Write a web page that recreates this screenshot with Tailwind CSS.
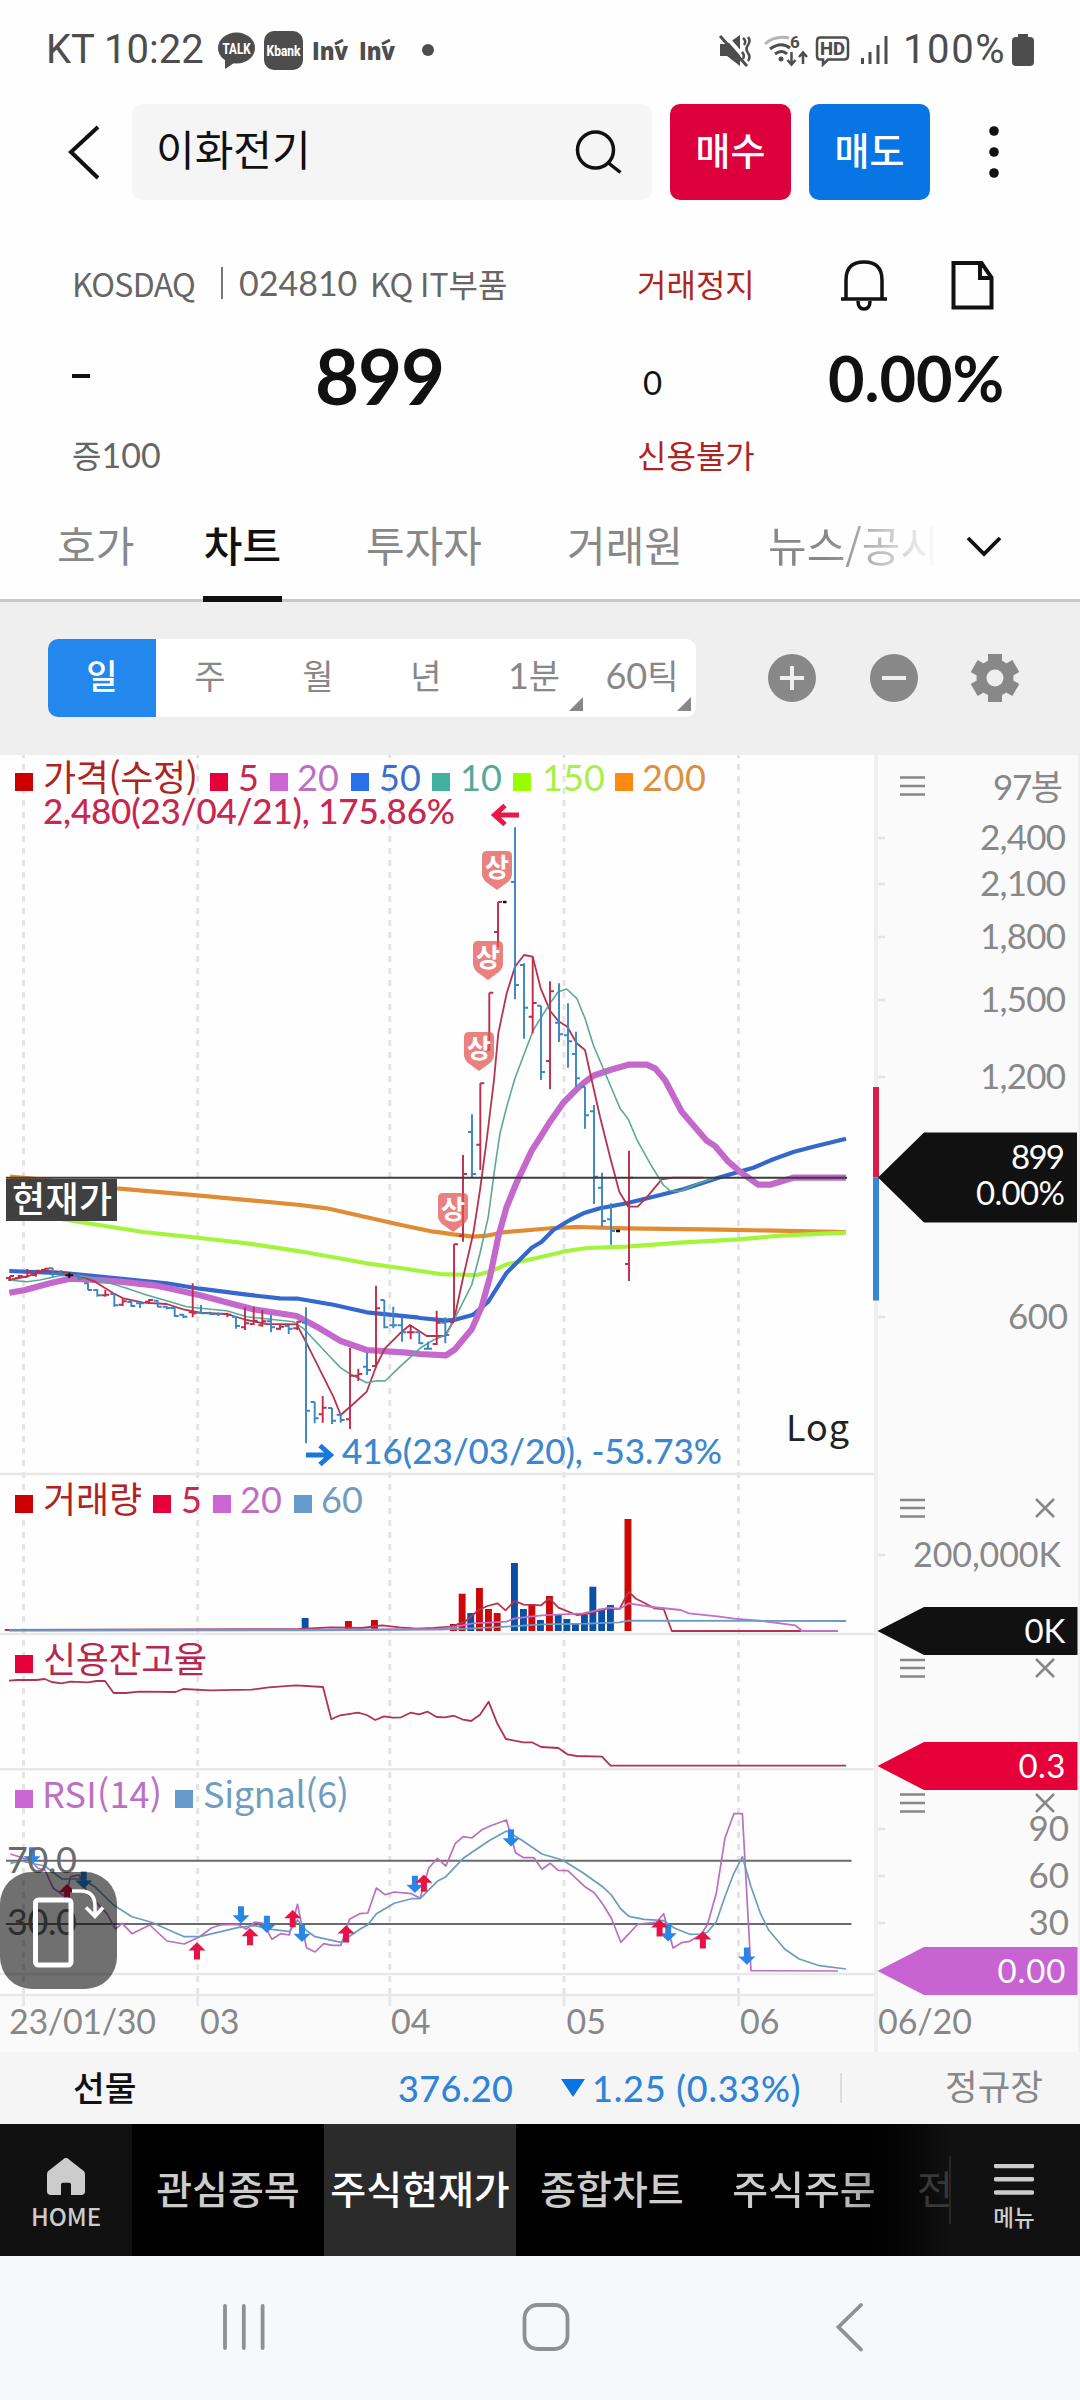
<!DOCTYPE html>
<html lang="ko">
<head>
<meta charset="utf-8">
<title>이화전기 차트</title>
<script src="https://cdn.jsdelivr.net/npm/@tailwindcss/browser@4"></script>
</head>
<body class="w-[1080px] h-[2400px] overflow-hidden bg-[#fefefe] font-['Noto_Sans_CJK_KR',sans-serif] text-[#111]">
<div class="flex flex-col w-[1080px] h-[2400px]">

  <!-- status bar -->
  <div class="flex h-[100px] items-center pl-[46px] text-[#4d4d4d] font-['Roboto',sans-serif]">
    <span class="w-[172px] text-[40px] leading-[40px] whitespace-nowrap">KT 10:22</span>
    <svg class="w-[220px] h-[60px]" viewBox="218 20 220 60">
      <ellipse cx="236.500" cy="48" rx="18.500" ry="15.500" fill="#4d4d4d"/><path d="M225 56v13l12-8z" fill="#4d4d4d"/>
      <text x="222.500" y="54" textLength="28" lengthAdjust="spacingAndGlyphs" font-size="15" font-weight="800" fill="#fff">TALK</text>
      <rect x="264" y="31" width="39" height="39" rx="10" fill="#4d4d4d"/>
      <text x="266.500" y="55.500" textLength="34" lengthAdjust="spacingAndGlyphs" font-size="15.500" font-weight="800" fill="#fff">Kbank</text>
      <g fill="#4d4d4d" font-family="Open Sans" font-weight="800" font-size="24">
        <text x="312" y="60" textLength="36" lengthAdjust="spacingAndGlyphs">Inv</text>
        <text x="359" y="60" textLength="36" lengthAdjust="spacingAndGlyphs">Inv</text>
      </g>
      <path d="M335 44l8-4M382 44l8-4" stroke="#4d4d4d" stroke-width="3"/>
      <circle cx="428" cy="50" r="6" fill="#4d4d4d"/>
    </svg>
    <svg class="ml-[278px] w-[172px] h-[40px]" viewBox="716 30 172 40" fill="none" stroke="#4d4d4d" stroke-width="3">
      <path d="M720 44h7l13-9v31l-13-10h-7z" fill="#4d4d4d" stroke="none"/><path d="M724 34l26 30" stroke="#fefefe" stroke-width="4"/><path d="M720 36l27 30" stroke-width="3"/><path d="M743 38q4 3 1 7M748 37q3 4 0 8t0 8 0 8M742 52q3 3 1 7" stroke-width="2.500"/>
      <path d="M765 44q10-9 24-6" stroke="#b5b5b5"/>
      <path d="M770 49q11-8 20-1M775 54q7-5 12 0"/><circle cx="781" cy="59" r="2.500" fill="#4d4d4d" stroke="none"/>
      <path d="M791.500 52v12M787.500 60l4 4.500 4-4.500M803 64V53M799 57l4-4.500 4 4.500" stroke-width="2.500"/>
      <text x="790" y="48" font-size="17" font-weight="700" fill="#4d4d4d" stroke="none">6</text>
      <path d="M820 37.500h24q4 0 4 4v14q0 4-4 4h-16l-5 5v-5h-3q-3 0-3-4v-14q0-4 3-4z" stroke-width="2.500"/>
      <text x="820" y="55" textLength="25" lengthAdjust="spacingAndGlyphs" font-size="18" font-weight="800" fill="#4d4d4d" stroke="none">HD</text>
      <path d="M862.500 58v6M870 52v12M878 45v19M886 36v28"/>
    </svg>
    <span class="ml-[15px] w-[109px] text-[40px] leading-[40px] whitespace-nowrap tracking-[1.6px]">100%</span>
    <svg class="w-[22px] h-[32px]" viewBox="0 0 22 32"><path d="M6 0h10v3h2q4 0 4 4v21q0 4-4 4H4q-4 0-4-4V7q0-4 4-4h2z" fill="#4d4d4d"/></svg>
  </div>

  <!-- search header -->
  <div class="flex h-[104px] items-center pt-1 pb-1 pl-[66px]">
    <svg class="w-[36px] h-[60px]" viewBox="66 122 36 60" fill="none" stroke="#111" stroke-width="4"><path d="M98 127L71 152l27 26"/></svg>
    <div class="ml-[30px] flex h-[96px] w-[520px] items-center justify-between rounded-[10px] bg-[#f5f5f5] pl-[24px] pr-[28px]">
      <span class="pb-[8px] text-[42px] leading-[60px] whitespace-nowrap">이화전기</span>
      <svg class="w-[50px] h-[50px]" viewBox="574 127 50 50" fill="none" stroke="#111" stroke-width="3.500"><circle cx="595.500" cy="150" r="18"/><path d="M608.500 163l12 9.500"/></svg>
    </div>
    <div class="ml-[18px] flex h-[96px] w-[121px] items-center justify-center rounded-[10px] bg-[#dc003c] pb-[8px] text-[38px] font-medium text-white">매수</div>
    <div class="ml-[18px] flex h-[96px] w-[121px] items-center justify-center rounded-[10px] bg-[#0875e5] pb-[8px] text-[38px] font-medium text-white">매도</div>
    <svg class="ml-[54px] w-[20px] h-[60px]" viewBox="984 122 20 60" fill="#111"><circle cx="994" cy="131" r="4.800"/><circle cx="994" cy="152" r="4.800"/><circle cx="994" cy="173" r="4.800"/></svg>
  </div>

  <!-- quote summary -->
  <div class="flex h-[128px] items-center pt-[33px] pl-[72px] text-[32px] leading-[40px] whitespace-nowrap">
    <div class="flex w-[565px] items-center pb-[3px] text-[#666]">
      <span class="w-[149px] tracking-[-0.7px]">KOSDAQ</span><span class="h-[32px] w-[2px] bg-[#777]"></span>
      <span class="ml-[16px] w-[131px] font-['Lato'] text-[34px]">024810</span><span class="w-[50px] tracking-[-0.5px]">KQ</span><span>IT부품</span>
    </div>
    <span class="w-[200px] pb-[3px] text-[#b0241f]">거래정지</span>
    <svg class="w-[54px] h-[56px]" viewBox="837 256 54 56" fill="none" stroke="#111" stroke-width="3.500"><path d="M841 298h46M846 297V279q0-18 18-18t18 18v18M858 300q0 8 6 8t6-8"/></svg>
    <svg class="ml-[57px] w-[50px] h-[56px]" viewBox="948 256 50 56" fill="none" stroke="#111" stroke-width="4"><path d="M953.500 262h28l10 14.500v30h-38zM980 262v15h11"/></svg>
  </div>
  <div class="flex h-[96px] items-center pb-[8px] pl-[72px] font-['Lato',sans-serif] whitespace-nowrap">
    <span class="h-[3.500px] w-[18px] bg-[#111]"></span>
    <span class="ml-[225px] w-[328px] text-[76px] leading-[80px] font-bold tracking-[-1.100px]">899</span>
    <span class="w-[185px] pt-[12px] text-[33px] leading-[40px]">0</span>
    <span class="pt-[3px] text-[63px] leading-[70px] font-bold">0.00%</span>
  </div>
  <div class="flex h-[72px] items-center pb-[24px] pl-[72px] text-[32px] leading-[40px]">
    <span class="w-[565px] pt-1 text-[#666]">증<span class="font-['Lato'] text-[34px]">100</span></span>
    <span class="pt-1 text-[#b0241f]">신용불가</span>
  </div>

  <!-- tabs -->
  <div class="relative flex h-[102px] items-start border-b-[3px] border-[#c8c8c8] pl-[57px] pt-[12px] text-[42px] leading-[64px] text-[#888] whitespace-nowrap">
    <span class="w-[146px]">호가</span>
    <span class="h-[90px] w-[79px] border-b-[6px] border-[#111] text-center font-medium text-[#111]">차트</span>
    <span class="ml-[84px] w-[201px]">투자자</span>
    <span class="w-[201px]">거래원</span>
    <span class="w-[170px] overflow-hidden bg-linear-to-r from-[#888] from-35% to-[#fefefe] to-100% bg-clip-text text-transparent">뉴스/공시</span>
    <svg class="ml-[24px] mt-[18px] w-[44px] h-[34px]" viewBox="962 532 44 34" fill="none" stroke="#111" stroke-width="3.800"><path d="M968 540l16 16 16-16"/></svg>
  </div>

  <!-- period selector -->
  <div class="flex h-[153px] items-center bg-[#efefef] pb-[2px] pl-[48px]">
    <div class="flex h-[78px] w-[648px] overflow-hidden rounded-[10px] bg-white text-center text-[34px] leading-[72px] text-[#888]">
      <span class="w-[108px] bg-[#2388ee] font-medium text-white">일</span>
      <span class="w-[108px]">주</span>
      <span class="w-[108px]">월</span>
      <span class="w-[108px]">년</span>
      <span class="relative w-[108px]"><span class="font-['Lato'] text-[36px]">1</span>분<svg class="absolute bottom-[6px] right-[5px] w-[14px] h-[14px]" viewBox="0 0 14 14"><path d="M14 0v14H0z" fill="#888"/></svg></span>
      <span class="relative w-[108px]"><span class="font-['Lato'] text-[36px]">60</span>틱<svg class="absolute bottom-[6px] right-[5px] w-[14px] h-[14px]" viewBox="0 0 14 14"><path d="M14 0v14H0z" fill="#888"/></svg></span>
    </div>
    <svg class="ml-[72px] w-[260px] h-[50px]" viewBox="768 652 260 50" fill="#888">
      <circle cx="792" cy="677" r="24"/><circle cx="894" cy="677" r="24"/>
      <path d="M780 677h24M792 665v24M882 677h24" stroke="#efefef" stroke-width="4"/>
      <g stroke="#888" stroke-width="14" fill="none">
        <path d="M995 653v12M995 689v12M974.200 665l10.400 6M1005.400 683l10.400 6M974.200 689l10.400-6M1005.400 671l10.400-6"/>
        <circle cx="995" cy="677" r="13.500" stroke-width="10"/>
      </g>
    </svg>
  </div>

  <!-- chart -->
  <div class="relative h-[1297px]">
    <svg id="chart" class="block w-[1080px] h-[1297px] font-['Lato','Noto_Sans_CJK_KR',sans-serif]" viewBox="0 755 1080 1297">
      <rect y="755" width="876" height="1240" fill="#fefefe"/>
      <rect x="876" y="755" width="202" height="1297" fill="#fafafa"/>
      <rect y="1995" width="876" height="57" fill="#fafafa"/>
      <path d="M23.500 752V1995M197.700 752V1995M389.800 752V1995M564 752V1995M738.500 752V1995" stroke="#e4e4e4" stroke-width="3" stroke-dasharray="6 6"/>
      <path d="M23.500 1995v11M197.700 1995v11M389.800 1995v11M564 1995v11M738.500 1995v11" stroke="#e8e8e8" stroke-width="3"/>
      <path d="M0 1474H876M0 1634H876M0 1769.300H876M0 1974H876M0 1995H876" stroke="#e8e8e8" stroke-width="2.500"/>
      <path d="M876 755V2052" stroke="#efefef" stroke-width="4"/><path d="M1079 755V2052" stroke="#efefef" stroke-width="2"/>
      <path d="M878 838h7M878 884h7M878 937h7M878 1000h7M878 1077h7M878 1317h7M878 1555h7M878 1829h7M878 1876h7M878 1923h7" stroke="#e4e4e4" stroke-width="2.500"/>

      <g id="plot" fill="none"></g>

      <!-- price legend -->
      <g>
        <rect x="15" y="773" width="18" height="18" fill="#cc0000"/><rect x="210" y="773" width="18" height="18" fill="#e60039"/><rect x="270" y="773" width="18" height="18" fill="#cc66d4"/><rect x="351" y="773" width="18" height="18" fill="#2970ea"/><rect x="432" y="773" width="18" height="18" fill="#40b0a0"/><rect x="513" y="773" width="18" height="18" fill="#99ff00"/><rect x="615" y="773" width="18" height="18" fill="#ff8a10"/>
      </g>
      <g font-size="36">
        <text x="43" y="791" textLength="155" font-family="Noto Sans CJK KR" fill="#b0241f">가격(수정)</text>
        <text x="238" y="791" fill="#c8284c">5</text><text x="297" y="791" fill="#bc70c4">20</text><text x="379" y="791" fill="#3c70c8">50</text><text x="460" y="791" fill="#58a898">10</text><text x="542" y="791" textLength="63" fill="#a8f048">150</text><text x="642" y="791" textLength="64" fill="#dc9040">200</text>
      </g>
      <text x="43" y="824" font-size="35" font-weight="500" textLength="412" fill="#c82850">2,480(23/04/21), 175.86%</text>
      <path d="M519 815H495M505 805.500l-10.500 9.500 10.500 9.500" fill="none" stroke="#e81848" stroke-width="5"/>
      <path d="M306 1455h24M320 1445.500l10.500 9.500-10.500 9.500" fill="none" stroke="#1878dc" stroke-width="5"/>
      <text x="342" y="1464" font-size="35" font-weight="500" textLength="380" fill="#3d87cf">416(23/03/20), -53.73%</text>
      <text x="786" y="1441" font-size="36" textLength="63" font-family="Noto Sans CJK KR" fill="#222">Log</text>
      <rect x="6" y="1179" width="111" height="42" fill="#404040"/>
      <text x="12" y="1213" font-size="36" font-weight="500" textLength="100" font-family="Noto Sans CJK KR" fill="#fff">현재가</text>

      <!-- volume legend -->
      <g><rect x="15" y="1495" width="18" height="18" fill="#cc0000"/><rect x="153" y="1495" width="18" height="18" fill="#e60039"/><rect x="213" y="1495" width="18" height="18" fill="#cc66d4"/><rect x="294" y="1495" width="18" height="18" fill="#669acc"/></g>
      <g font-size="36"><text x="43" y="1513" textLength="99" font-family="Noto Sans CJK KR" fill="#b0241f">거래량</text><text x="181" y="1513" fill="#c8284c">5</text><text x="240" y="1513" fill="#bc70c4">20</text><text x="321" y="1513" fill="#709cc0">60</text></g>
      <!-- credit legend -->
      <rect x="15" y="1655" width="18" height="18" fill="#e60039"/>
      <text x="43" y="1673" font-size="36" textLength="164" font-family="Noto Sans CJK KR" fill="#b8284c">신용잔고율</text>
      <!-- RSI legend -->
      <rect x="15" y="1790" width="18" height="18" fill="#cc66d4"/><rect x="175" y="1790" width="18" height="18" fill="#669acc"/>
      <g font-size="36" font-family="Noto Sans CJK KR"><text x="42" y="1808" textLength="120" fill="#bc70c4">RSI(14)</text><text x="203" y="1808" textLength="146" fill="#709cc0">Signal(6)</text></g>
      <g font-size="36" fill="#6a6a6a"><text x="7" y="1873" textLength="70">70.0</text><text x="7" y="1935" textLength="70">30.0</text></g>

      <!-- dates -->
      <g font-size="34" fill="#888"><text x="9" y="2034" textLength="147">23/01/30</text><text x="200" y="2034">03</text><text x="391" y="2034">04</text><text x="566.500" y="2034">05</text><text x="740" y="2034">06</text><text x="878" y="2034" textLength="94">06/20</text></g>

      <!-- value axis -->
      <g font-size="35" fill="#888" text-anchor="end">
        <text x="1066" y="850" textLength="86">2,400</text><text x="1066" y="896" textLength="86">2,100</text><text x="1066" y="949" textLength="86">1,800</text><text x="1066" y="1012" textLength="86">1,500</text><text x="1066" y="1089" textLength="86">1,200</text><text x="1068" y="1329" textLength="60">600</text>
        <text x="1063" y="800" textLength="70">97봉</text>
        <text x="1061" y="1567" font-size="34" textLength="148">200,000K</text>
        <text x="1069" y="1841">90</text><text x="1069" y="1888">60</text><text x="1069" y="1935">30</text>
      </g>
      <g fill="none" stroke="#888" stroke-width="2.500">
        <path d="M900 777.500h25M900 786h25M900 794.500h25M900 1500h25M900 1508h25M900 1516.500h25M900 1660h25M900 1668h25M900 1676.500h25M900 1794.500h25M900 1803h25M900 1811.500h25"/>
        <path d="M1036 1499l18 18M1054 1499l-18 18M1036 1659l18 18M1054 1659l-18 18M1036 1794l18 18M1054 1794l-18 18"/>
      </g>
      <rect x="873" y="1087" width="6" height="90.500" fill="#dc1c48"/><rect x="873" y="1177.500" width="6" height="123" fill="#3488d8"/>
      <path d="M878 1177.500l46-45h153v90H924z" fill="#111"/>
      <path d="M877.500 1631l46.500-24h153.500v48H924z" fill="#111"/>
      <path d="M877.500 1766l46.500-24h153.500v48H924z" fill="#e60039"/>
      <path d="M877.500 1971l46.500-24h153.500v48H924z" fill="#c864d2"/>
      <g font-size="33" fill="#fff" text-anchor="end">
        <text x="1065" y="1168.500" textLength="54">899</text><text x="1065" y="1205" textLength="89">0.00%</text>
        <text x="1065.500" y="1643">0K</text><text x="1065.500" y="1777.500" textLength="47">0.3</text><text x="1065.500" y="1983" textLength="68">0.00</text>
      </g>
    </svg>

    <!-- rotate button -->
    <div class="absolute left-0 top-[1117px] h-[117px] w-[117px] rounded-[32px] bg-black/56">
      <svg class="w-[117px] h-[117px]" viewBox="0 1872 117 117" fill="none" stroke="#fff" stroke-width="5"><rect x="35.500" y="1900" width="35.500" height="65" rx="3"/><path d="M72 1891h8q15 0 15 15v9" stroke-width="3.500"/><path d="M86 1907.500l9 9 8-9" stroke-width="3.500"/></svg>
    </div>
  </div>

  <!-- futures ticker -->
  <div class="flex h-[72px] items-center bg-[#f5f5f5] pl-[73px] text-[36px] leading-[40px] whitespace-nowrap">
    <span class="w-[325px] pb-[5px] text-[34.500px] font-medium">선물</span>
    <span class="w-[163px] font-['Lato'] font-medium tracking-[0.4px] text-[#2f84d8]">376.20</span>
    <svg class="w-[24px] h-[18px]" viewBox="0 0 24 18"><path d="M0 0h24L12 18z" fill="#0a75e0"/></svg>
    <span class="ml-[7px] w-[248px] font-['Lato'] font-medium tracking-[0.8px] text-[#2f84d8]">1.25 (0.33%)</span>
    <span class="h-[30px] w-[2px] bg-[#ddd]"></span>
    <span class="ml-[103px] pb-[6px] text-[35.500px] text-[#888]">정규장</span>
  </div>

  <!-- bottom menu -->
  <div class="flex h-[132px] bg-[#111] text-[39px] text-[#ccc] whitespace-nowrap">
    <div class="flex w-[132px] flex-col items-center pt-[34px]">
      <svg class="w-[38px] h-[38px]" viewBox="0 0 38 40" preserveAspectRatio="none"><path d="M19 0q2 0 3 1.500L37 14q1 1 1 3v18q0 4-4 4H24V28q0-2-2-2h-6q-2 0-2 2v11H4q-4 0-4-4V17q0-2 1-3L16 1.500Q17 0 19 0z" fill="#ccc"/></svg>
      <span class="mt-[5px] text-[24px] leading-[30px] font-medium">HOME</span>
    </div>
    <div class="flex w-[817px] overflow-hidden bg-linear-to-r from-black from-84% to-[#111] leading-[126px]">
      <span class="w-[192px] shrink-0 text-center font-medium">관심종목</span>
      <span class="w-[192px] shrink-0 bg-[#2b2b2b] text-center font-medium text-white">주식현재가</span>
      <span class="w-[192px] shrink-0 text-center font-medium">종합차트</span>
      <span class="w-[192px] shrink-0 bg-linear-to-r from-[#ccc] from-65% to-[#777] bg-clip-text text-center font-medium text-transparent">주식주문</span>
      <span class="ml-[17px] w-[60px] shrink-0 text-[#383838]">전</span>
    </div>
    <div class="mt-[32px] h-[68px] w-[2px] bg-[#262626]"></div>
    <div class="flex w-[126px] flex-col items-center pt-[40px]">
      <svg class="w-[40px] h-[32px]" viewBox="0 0 40 32"><path d="M2 2h36M2 15.200h36M2 28.400h36" stroke="#ccc" stroke-width="4.500" stroke-linecap="round"/></svg>
      <span class="mt-[5px] text-[22.500px] leading-[30px] font-medium">메뉴</span>
    </div>
  </div>

  <!-- system navigation -->
  <div class="h-[144px] bg-[#f7f8fa]">
    <svg class="w-[1080px] h-[144px]" viewBox="0 2256 1080 144" fill="none" stroke="#909090" stroke-width="3.800" stroke-linecap="round"><path d="M225 2306v42M243.800 2306v42M262.600 2306v42M861 2305l-22.500 22 22.500 22.500"/><rect x="524.500" y="2305" width="43" height="44" rx="13"/></svg>
  </div>
</div>

<script>
const NS = 'http://www.w3.org/2000/svg', plot = document.getElementById('plot');
const add = (tag, attrs, text) => {
  const el = document.createElementNS(NS, tag);
  for (const k in attrs) el.setAttribute(k, attrs[k]);
  if (text) el.textContent = text;
  plot.appendChild(el);
  return el;
};
// Each series is stored as tiles; a tile has an origin and its own units per pixel.
const TILE = {
  A: [0, 1080, 3, 3], B: [420, 1080, 3, 3], C: [420, 740, 3, 3],
  D: [0, 1460, 2.904, 3], E: [440, 1460, 2.45, 3], F: [0, 1760, 2.904, 3], G: [440, 1760, 2.45, 3]
};
const at = (t, x, y) => { const [ox, oy, sx, sy] = TILE[t]; return [ox + x / sx, oy + y / sy]; };
const line = (color, width, ...parts) => {
  const pts = [];
  for (const p of parts) {
    const t = p[0], n = p.slice(1).trim().split(/[ ,]+/).map(Number);
    for (let i = 0; i < n.length; i += 2) pts.push(at(t, n[i], n[i + 1]).map(v => v.toFixed(1)).join());
  }
  add('polyline', { points: pts.join(' '), stroke: color, 'stroke-width': width, 'stroke-linejoin': 'round' });
};

// price: moving averages
line('#e08c34', 4.2, 'A30,290 120,298 350,325 600,347 900,375 980,385 1100,412 1200,434 1300,455', 'B60,457 100,463 160,470 200,467 250,457 330,450 400,444 470,441 620,445 900,449 1278,456');
line('#a4f43c', 4.2, 'A100,403 215,422 430,456 600,474 740,490 900,514 1100,550 1200,564 1320,582', 'B80,583 170,585 210,575 260,553 350,534 440,513 500,504 620,500 780,488 955,478 1080,467 1278,458');
line('#3468cc', 4.2, 'A28,573 200,580 300,590 500,610 600,626 740,644 840,655 895,656 1000,674 1100,697 1250,712', 'B0,714 80,722 110,718 160,704 205,665 260,578 335,503 365,485 400,450 450,420 490,400 540,385 620,370 700,350 790,328 900,292 1000,263 1060,238 1120,216 1180,200 1278,176');
line('#c468cc', 6.2, 'A28,638 75,630 150,610 210,596 260,598 360,605 470,617 530,630 600,646 690,670 760,688 890,708 950,740 1020,782 1100,810 1220,818', 'B0,822 78,826 105,808 155,748 185,680 210,590 235,470 260,380 290,307 335,212 365,165 390,125 430,68 470,28 490,10', 'C520,1007 570,990 625,974 680,974 705,985 735,1020', 'B785,95 860,182 885,198 925,245 960,275 1015,314 1050,314 1120,293 1278,293');
line('#b43450', 1.8, 'A25,600 80,590 130,572 180,575 230,585 285,605 340,640 370,655 430,668 500,672 550,688 600,698 680,702 740,720 800,732 890,733 920,790 1000,950 1022,1005 1060,972 1100,935 1130,855 1155,805 1200,760 1230,735 1280,768 1335,768', 'B102,720 130,590 160,460 180,330 200,180 222,0', 'C235,880 260,760 285,680 312,645 338,650 362,745 390,812 415,843 442,860 470,910 495,930 515,1020', 'B540,110 570,230 598,335 625,380 653,380 680,352 725,298 760,293 850,293');
line('#5ca898', 1.6, 'A25,600 80,605 120,600 200,583 250,588 300,600 380,625 440,645 500,662 560,680 600,685 680,692 740,710 880,725 910,745 1020,862 1050,882 1100,908 1130,902 1155,903 1200,860 1260,805 1300,780', 'B78,765 102,720 155,615 180,520 205,410 225,260 240,160 260,80', 'C285,1015 340,870 390,790 415,755 440,747 470,775 495,835 520,915 600,1105 625,1138', 'B650,178 690,250 730,315 750,332 780,334 830,312 880,296');

// price: OHLC bars  [tile, colour, x, high, low, open, close]
const COL = { r: '#c02c4a', b: '#3a86c2', k: '#111' };
[
  'A r 30 588 603 594 588','A r 56 585 597 595 588','A r 82 567 592 590 575','A r 108 572 590 585 572','A r 135 565 573 570 566','A b 158 563 590 565 582','A b 184 570 588 580 586','A k 208 578 594 586 586','A b 236 582 600 588 596','A b 264 608 630 610 630','A b 292 628 650 630 646','A r 316 630 650 646 644','A b 343 640 680 642 676','A r 368 655 678 674 664','A b 394 660 680 666 678','A b 420 666 684 670 670','A r 447 658 672 665 660','A b 473 660 682 662 680','A b 500 678 688 680 684','A b 524 680 710 684 708','A b 550 702 714 704 710','A r 578 610 712 697 700','A b 603 675 702 698 700','A b 630 695 704 700 702','A b 655 698 708 702 702','A r 682 698 712 702 704','A b 708 708 746 710 738','A r 735 682 750 742 730','A r 761 680 735 732 722','A r 787 690 740 736 724','A b 813 705 757 724 742','A r 840 732 750 746 740','A b 866 735 762 738 746','A r 892 723 750 745 725','A b 918 682 1090 728 992','A b 944 966 1030 966 1015','A r 968 948 1028 1003 983','A b 996 984 1032 984 1022','A b 1022 1000 1028 1004 1020','A r 1050 803 1047 1018 887','A r 1075 866 903 887 882','A b 1101 818 885 860 870','A r 1128 617 862 858 685','A b 1153 660 745 660 742','A b 1180 680 745 736 736','A b 1206 710 785 736 757','A r 1232 735 778 757 757','A b 1258 757 792 757 790','A b 1284 785 808 806 806','A r 1310 692 795 792 728','A b 1336 712 790 728 765','A r 1362 493 725 727 493',
  'B r 129 225 485 467 282','B b 156 103 293 156 282','B r 181 10 270 194 10','C r 208 758 932 930 758','C r 234 486 622 576 486','C b 285 262 778 426 735','C b 312 670 896 675 803','C r 338 650 880 830 789','C b 363 797 1020 797 996','C r 390 724 1048 963 754','C b 417 730 906 848 883','C b 444 790 983 886 904','C b 468 875 1042 942 1015','C b 495 1040 1166 1040 1126','B b 522 75 372 94 290','B b 546 278 440 323 423','B b 573 370 494 418 453','B r 627 212 603 552 293'
].forEach(s => {
  const [t, c, ...n] = s.split(' '), [x, h, l, o, cl] = n.map(Number);
  const P = (a, b) => at(t, a, b).map(v => v.toFixed(1)).join(' ');
  add('path', { d: `M${P(x, h)}L${P(x, l)}M${P(x - 12, o)}L${P(x, o)}M${P(x, cl)}L${P(x + 12, cl)}`, stroke: COL[c], 'stroke-width': 1.9 });
});
add('path', { d: 'M503 902h3.500M616 1231h4', stroke: '#111', 'stroke-width': 2.4 });
add('path', { d: 'M6 1177.700H847', stroke: '#3c3c3c', 'stroke-width': 2 });

// upper-limit badges
[[482, 851], [473, 941], [464, 1032], [438, 1193]].forEach(([x, y]) => {
  add('path', { d: `M${x + 5} ${y}h20q5 0 5 5v18q0 4-4 8l-11 8-11-8q-4-4-4-8V${y + 5}q0-5 5-5z`, fill: '#e05050', 'fill-opacity': .72 });
  add('text', { x: x + 15, y: y + 26, 'text-anchor': 'middle', 'font-size': 26, 'font-weight': 700, fill: '#fff', 'font-family': 'Noto Sans CJK KR' }, '상');
});

// volume
[[301.7,1618,0],[345,1621,1],[371,1620,1],[450,1624,1],[458.7,1593.7,1],[467.3,1613,0],[476,1588,1],[485,1609,1],[493.7,1613,1],[511,1563,0],[520,1609,0],[528.4,1604,1],[537,1620,0],[546,1596,1],[554.8,1614,0],[563.4,1619,0],[572,1624,0],[581,1615,0],[589.4,1586.7,0],[598.2,1608.7,0],[607,1605,0],[624.5,1519,1]]
  .forEach(([x, y, up]) => add('rect', { x, y, width: 6.9, height: 1631 - y, fill: up ? '#cc0808' : '#0c50a4' }));
line('#b43450', 1.8, 'D14,510 870,507 960,502 1050,504 1110,496 1160,502 1210,506 1260,504 1310,500 1350,485 1390,450 1415,438 1445,430 1468,451', 'E183,423 205,434 248,436 268,415 290,443 335,465 360,462 410,445 440,447 462,395 480,416 500,428 525,445 548,447 568,513 885,513');
line('#c070c8', 1.8, 'D26,511 900,509', 'E0,507 40,500 80,490 163,485 183,475 250,466 350,460 415,443 440,447 462,430 520,441 590,450 610,460 680,469 720,476 790,483 870,496 888,513 975,513');
line('#6c9cc4', 1.8, 'D26,512 900,511', 'E0,509 80,505 163,500 250,493 360,491 440,487 462,482 995,483');

// credit balance ratio
line('#b03450', 1.8, 'D26,662 50,660 105,660 130,657 150,666 178,670 205,665 255,667 280,663 305,663 330,699 365,699 405,695 510,696 532,687 610,691 730,689 780,682 860,676 938,681 962,778 988,766 1040,758 1065,765 1090,780 1115,769 1140,773 1165,772 1192,758 1217,763 1242,755 1268,771 1292,772 1318,767 1342,778 1368,783 1394,764 1419,725 1444,790 1469,837 1520,847', 'E225,847 248,861 290,864 312,883 335,888 397,890 418,917 995,917');

// RSI
add('path', { d: 'M6 1860.700H851.500M6 1924H851.500', stroke: '#6a6a6a', 'stroke-width': 2 });
line('#b870c0', 1.7, 'F30,282 60,292 93,305 110,325 130,330 155,385 190,410 205,350 230,345 255,400 310,460 335,507 355,490 383,521 435,495 485,543 535,552 580,530 615,503 640,495 690,493 715,508 740,486 765,490 790,538 815,521 840,525 864,433 890,563 915,576 940,551 965,556 990,556 1015,478 1045,461 1068,459 1093,384 1118,404 1145,396 1195,401 1220,415 1245,325 1270,295 1295,318 1322,251 1345,230 1370,234 1400,209 1425,197 1471,180', 'G185,278 205,293 230,293 250,328 270,310 290,331 313,332 355,380 378,398 400,435 420,475 443,547 485,492 530,487 548,461 571,564 592,548 612,544 640,523 655,495 677,400 698,235 720,161 741,161 762,632 975,633');
line('#6c9cc0', 1.7, 'F30,310 60,303 130,318 180,357 240,357 275,380 330,435 383,470 440,487 535,530 580,530 690,503 740,497 790,508 840,515 864,480 890,512 915,530 990,547 1045,508 1068,494 1093,461 1145,430 1195,416 1220,416 1270,364 1295,350 1345,295 1420,242 1471,213', 'G200,240 250,282 300,300 350,338 400,382 420,405 443,447 463,469 500,478 548,482 575,505 612,523 640,522 655,517 677,485 698,410 720,340 741,290 762,380 785,460 805,510 845,568 880,597 930,617 995,627');
const arrow = (t, x, y, up) => {
  const [cx, cy] = at(t, x, y), s = up ? -1 : 1;
  add('path', { d: 'M-3-8.500H3V0.500H8.500L0 8.700L-8.500 0.500H-3z', transform: `translate(${cx.toFixed(1)} ${cy.toFixed(1)}) scale(1 ${s})`, fill: up ? '#e61446' : '#2a86e6' });
};
[[93,287],[243,360],[700,464],[775,493],[877,520],[1205,373],[1484,233]].forEach(([x, y]) => arrow('F', x, y, false));
[[195,398],[572,573],[726,530],[850,476],[1005,522],[1231,370]].forEach(([x, y]) => arrow('F', x, y, true));
[[559,518],[752,588]].forEach(([x, y]) => arrow('G', x, y, false));
[[538,504],[644,540]].forEach(([x, y]) => arrow('G', x, y, true));
</script>
</body>
</html>
